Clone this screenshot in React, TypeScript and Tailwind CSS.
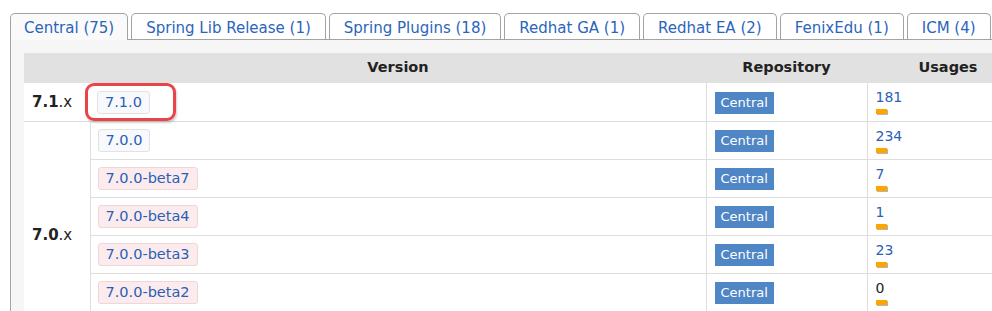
import React from "react";

const tabs = [
  "Central (75)",
  "Spring Lib Release (1)",
  "Spring Plugins (18)",
  "Redhat GA (1)",
  "Redhat EA (2)",
  "FenixEdu (1)",
  "ICM (4)",
];

type Row = { v: string; beta: boolean; u: string; zero?: boolean };

const rows70: Row[] = [
  { v: "7.0.0", beta: false, u: "234" },
  { v: "7.0.0-beta7", beta: true, u: "7" },
  { v: "7.0.0-beta4", beta: true, u: "1" },
  { v: "7.0.0-beta3", beta: true, u: "23" },
  { v: "7.0.0-beta2", beta: true, u: "0", zero: true },
];

function VersionBadge({ v, beta }: { v: string; beta: boolean }) {
  return (
    <span
      className={
        beta
          ? "inline-block h-[23px] leading-[21px] px-[7px] rounded-[3px] border border-[#efd6d9] bg-[#fcebed] text-[#2a5fb5] text-[14.5px]"
          : "inline-block h-[23px] leading-[21px] px-[7px] rounded-[3px] border border-[#e2e2e2] bg-[#f8f9fc] text-[#2a5fb5] text-[14.5px]"
      }
    >
      {v}
    </span>
  );
}

function RepoBadge() {
  return (
    <span className="inline-block h-[22px] leading-[22px] px-[6px] bg-[#4f86c6] text-white text-[13px]">
      Central
    </span>
  );
}

function Usage({ u, zero }: { u: string; zero?: boolean }) {
  return (
    <div className="flex flex-col items-start">
      <span
        className={
          zero
            ? "text-[14px] leading-[16px] text-[#222]"
            : "text-[14px] leading-[16px] text-[#2a5fb5]"
        }
      >
        {u}
      </span>
      <span className="mt-[4px] block w-[11px] h-[5px] bg-[#ffa500] shadow-[1px_1px_0_#b5b5b5]" />
    </div>
  );
}

export default function App() {
  return (
    <div className="w-[992px] h-[311px] overflow-hidden bg-white font-['DejaVu_Sans',Verdana,sans-serif]">
      <div className="pt-[13px] pl-[10px]">
        {/* tabs */}
        <div className="flex items-end gap-[3px] border-b border-[#a3a3a3] w-[1100px] h-[27px]">
          {tabs.map((t, i) =>
            i === 0 ? (
              <div
                key={t}
                className="relative -mb-px h-[27px] px-[13px] pt-[4px] border border-b-0 border-[#a3a3a3] rounded-t-[5px] bg-[#fafafa] text-[#2b65bb] text-[15px] leading-[20px] whitespace-nowrap z-10"
              >
                {t}
              </div>
            ) : (
              <div
                key={t}
                className="h-[26px] px-[14px] pt-[4px] border border-b-0 border-[#a3a3a3] rounded-t-[5px] bg-white text-[#2b65bb] text-[15px] leading-[20px] whitespace-nowrap"
              >
                {t}
              </div>
            )
          )}
        </div>
        {/* panel */}
        <div className="border-l border-[#a3a3a3] bg-[#f6f6f6] pl-[13px] pt-[13px] w-[1100px]">
          <table className="table-fixed border-collapse w-[1005px] bg-white text-[#222]">
            <colgroup>
              <col className="w-[66px]" />
              <col className="w-[616px]" />
              <col className="w-[161px]" />
              <col className="w-[162px]" />
            </colgroup>
            <thead>
              <tr className="h-[30px] bg-[#e1e1e1]">
                <th className="p-0 text-[14.5px] font-bold"></th>
                <th className="p-0 text-[14.5px] font-bold text-center">Version</th>
                <th className="p-0 text-[14.5px] font-bold text-center">Repository</th>
                <th className="p-0 text-[14.5px] font-bold text-center">Usages</th>
              </tr>
            </thead>
            <tbody>
              <tr className="h-[38px] border-b border-[#dedede]">
                <td className="p-0 pl-[8px] text-[15px] align-middle">
                  <b>7.1</b>.x
                </td>
                <td className="p-0 pl-[7px] align-middle">
                  <div className="relative">
                    <VersionBadge v="7.1.0" beta={false} />
                    <div className="absolute left-[-12px] top-[-7px] w-[91px] h-[38px] rounded-[9px] border-[3px] border-[#e8454b] shadow-[1px_2px_2px_rgba(0,0,0,0.18)]" />
                  </div>
                </td>
                <td className="p-0 pl-[8px] align-middle border-l border-[#dedede]">
                  <RepoBadge />
                </td>
                <td className="p-0 pl-[8px] align-middle border-l border-[#dedede]">
                  <Usage u="181" />
                </td>
              </tr>
              {rows70.map((r, i) => (
                <tr key={r.v} className="h-[38px] border-b border-[#dedede]">
                  {i === 0 && (
                    <td rowSpan={6} className="p-0 pl-[8px] text-[15px] align-middle">
                      <b>7.0</b>.x
                    </td>
                  )}
                  <td className="p-0 pl-[7px] align-middle border-l border-[#dedede]">
                    <VersionBadge v={r.v} beta={r.beta} />
                  </td>
                  <td className="p-0 pl-[8px] align-middle border-l border-[#dedede]">
                    <RepoBadge />
                  </td>
                  <td className="p-0 pl-[8px] align-middle border-l border-[#dedede]">
                    <Usage u={r.u} zero={r.zero} />
                  </td>
                </tr>
              ))}
              <tr className="h-[38px] border-b border-[#dedede]">
                <td className="p-0 border-l border-[#dedede]"></td>
                <td className="p-0 border-l border-[#dedede]"></td>
                <td className="p-0 border-l border-[#dedede]"></td>
              </tr>
            </tbody>
          </table>
        </div>
      </div>
    </div>
  );
}
